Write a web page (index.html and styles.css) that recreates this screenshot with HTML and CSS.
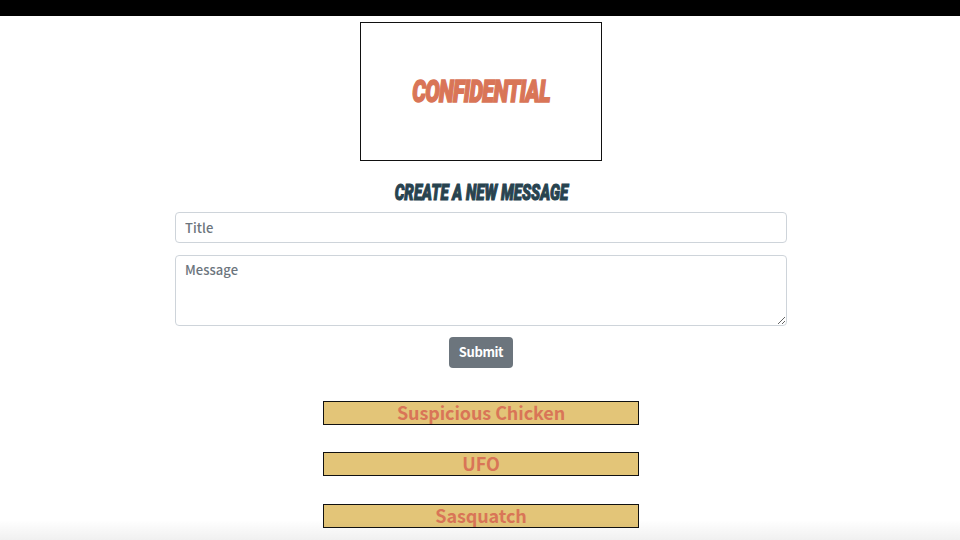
FILE: index.html
```
<!DOCTYPE html>
<html lang="en">
<head>
<meta charset="utf-8">
<title>Confidential</title>
<link rel="stylesheet" href="styles.css">
</head>
<body>
<div class="topbar"></div>
<main class="page">
  <header class="banner"><h1 class="logo">CONFIDENTIAL</h1></header>
  <h2 class="subtitle"><span class="subtitle-text">CREATE A NEW MESSAGE</span></h2>
  <form class="form">
    <input class="field" type="text" placeholder="Title">
    <textarea class="field area" placeholder="Message"></textarea>
    <button class="submit" type="button">Submit</button>
  </form>
  <section class="messages">
    <h3 class="message">Suspicious Chicken</h3>
    <h3 class="message">UFO</h3>
    <h3 class="message">Sasquatch</h3>
  </section>
</main>
<div class="shade"></div>
</body>
</html>
```
FILE: styles.css
```
* { box-sizing: border-box; }
body {
  margin: 0;
  height: 540px;
  overflow: hidden;
  background: #fff;
  font-family: "Noto Sans CJK SC", "Noto Sans", sans-serif;
}
h1, h2, h3 { margin: 0; }
.topbar { height: 16px; background: #000; }
.page {
  width: 612px;
  margin-left: 175px;
  padding-top: 6px;
  display: flex;
  flex-direction: column;
  align-items: center;
}
.banner {
  width: 242px;
  height: 139px;
  padding-bottom: 2px;
  border: 1px solid #111;
  display: flex;
  align-items: center;
  justify-content: center;
}
.logo, .subtitle-text {
  font-family: Roboto, "Liberation Sans", sans-serif;
  font-weight: 900;
  font-style: italic;
  white-space: nowrap;
}
.logo {
  color: #d97557;
  font-size: 32px;
  line-height: 38px;
  letter-spacing: -1px;
  -webkit-text-stroke: 1.6px #d97557;
  transform: scaleX(.675);
}
.subtitle {
  height: 51px;
  padding-top: 19px;
  color: #28434f;
  line-height: 26px;
  display: flex;
  justify-content: center;
}
.subtitle-text {
  font-size: 22px;
  -webkit-text-stroke: 1.1px #28434f;
  transform: scaleX(.686);
}
.form {
  width: 100%;
  display: flex;
  flex-direction: column;
  align-items: center;
}
.field {
  display: block;
  width: 100%;
  height: 31px;
  padding: 0 9px;
  border: 1px solid #ced4da;
  border-radius: 4px;
  background: #fff;
  font: 500 13px/20px "Noto Sans CJK SC", "Noto Sans", sans-serif;
  letter-spacing: .05px;
  outline: none;
}
.field::placeholder { color: #6c757d; opacity: 1; }
.area { height: 71px; margin-top: 12px; padding-top: 4px; resize: vertical; }
.submit {
  width: 64px;
  height: 31px;
  margin-top: 11px;
  padding: 0 0 1px;
  border: 0;
  border-radius: 4px;
  background: #6c757d;
  color: #fff;
  font: 700 13px/20px "Noto Sans CJK SC", "Noto Sans", sans-serif;
  letter-spacing: -.4px;
}
.messages {
  width: 316px;
  margin-top: 33px;
  display: flex;
  flex-direction: column;
  gap: 27.4px;
}
.message {
  height: 24px;
  border: 1px solid #111;
  background: #e3c578;
  color: #d97557;
  text-align: center;
  font-size: 18px;
  line-height: 21px;
  letter-spacing: -.1px;
}
.shade {
  position: absolute;
  left: 0;
  right: 0;
  bottom: 0;
  height: 20px;
  background: linear-gradient(rgba(0,0,0,0), rgba(0,0,0,.06));
  pointer-events: none;
}
```
